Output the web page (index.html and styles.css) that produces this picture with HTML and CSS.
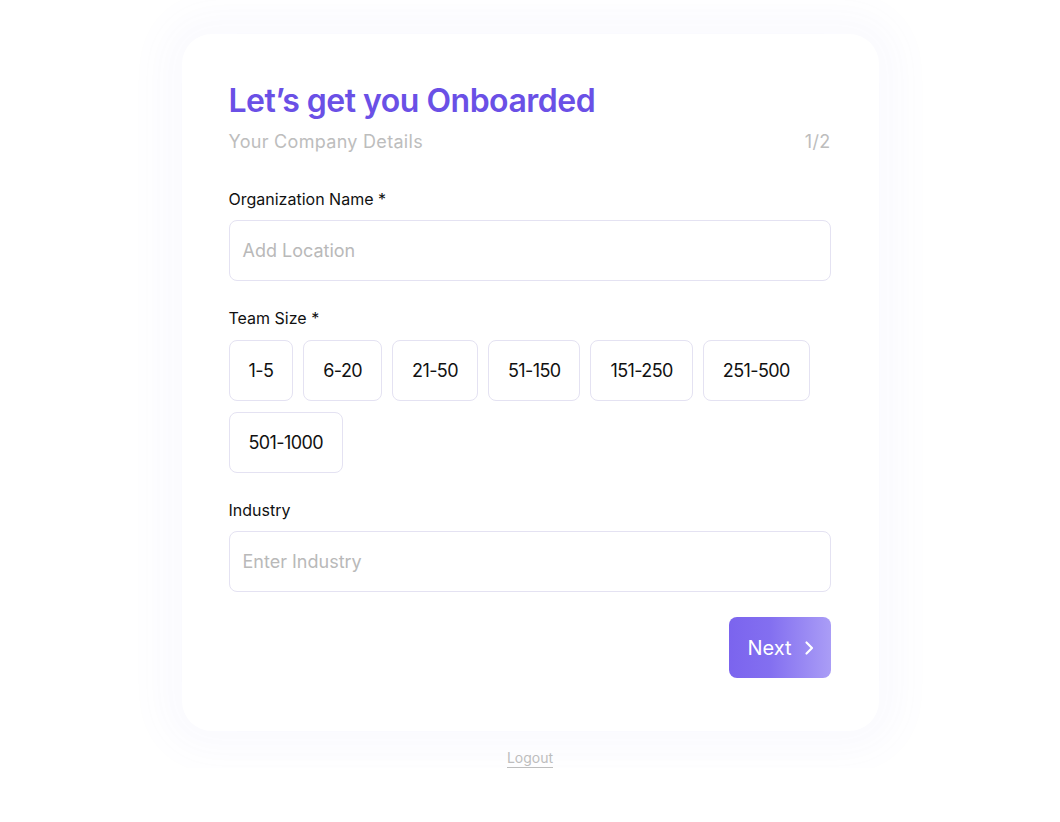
FILE: index.html
```html
<!DOCTYPE html>
<html lang="en">
<head>
<meta charset="utf-8">
<title>Onboarding</title>
<link rel="stylesheet" href="styles.css">
</head>
<body>
<main class="page">
  <section class="card">
    <h1 class="title">Let’s get you Onboarded</h1>
    <div class="subhead">
      <span>Your Company Details</span>
      <span>1/2</span>
    </div>

    <div class="field">
      <label class="label">Organization Name *</label>
      <div class="input"><span class="placeholder">Add Location</span></div>
    </div>

    <div class="field">
      <label class="label label-team">Team Size *</label>
      <div class="chips">
        <span class="chip">1-5</span>
        <span class="chip">6-20</span>
        <span class="chip">21-50</span>
        <span class="chip">51-150</span>
        <span class="chip">151-250</span>
        <span class="chip">251-500</span>
        <span class="chip">501-1000</span>
      </div>
    </div>

    <div class="field">
      <label class="label">Industry</label>
      <div class="input"><span class="placeholder">Enter Industry</span></div>
    </div>

    <div class="actions">
      <button class="next">Next
        <svg width="10" height="16" viewBox="0 0 10 16" fill="none"><path d="M2.5 2.5l5.5 5.5-5.5 5.5" stroke="#fff" stroke-width="2.2" stroke-linecap="round" stroke-linejoin="round"/></svg>
      </button>
    </div>
  </section>
  <a class="logout" href="#">Logout</a>
</main>
</body>
</html>
```

FILE: styles.css
```css
* { box-sizing: border-box; }
html, body { margin: 0; padding: 0; background: #fff; }
body { font-family: Inter, "Noto Sans", sans-serif; color: #111; }

.page {
  display: flex;
  flex-direction: column;
  align-items: center;
  padding-top: 34px;
}

.card {
  width: 697px;
  height: 697px;
  background: #fff;
  border-radius: 30px;
  padding: 47px 48px 48px 47px;
  box-shadow: 0 0 36px 22px rgba(110, 100, 235, 0.035);
}

.title {
  margin: 0;
  font-size: 32px;
  line-height: 40px;
  font-weight: 600;
  color: #6a50e6;
  letter-spacing: -0.5px;
}

.subhead {
  display: flex;
  justify-content: space-between;
  margin-top: 9px;
  font-size: 18px;
  line-height: 24px;
  color: #bdbdbd;
  font-weight: 400;
  letter-spacing: 0.3px;
}

.field { margin-top: 34px; }
.field + .field { margin-top: 26px; }

.label {
  display: block;
  font-size: 16px;
  line-height: 22px;
  color: #111;
  margin-bottom: 10px;
}

.label-team { margin-bottom: 11px; }

.input {
  height: 61px;
  border: 1.5px solid #e4e2f2;
  border-radius: 8px;
  display: flex;
  align-items: center;
  padding: 0 13px;
}

.placeholder {
  font-size: 18px;
  color: #b9b9b9;
}

.chips {
  display: flex;
  flex-wrap: wrap;
  gap: 11px 10px;
}

.chip {
  height: 61px;
  padding: 0 19px;
  border: 1.5px solid #e4e2f2;
  border-radius: 8px;
  display: flex;
  align-items: center;
  font-size: 18px;
  letter-spacing: -0.6px;
  color: #111;
}

.actions {
  display: flex;
  justify-content: flex-end;
  margin-top: 25px;
}

.next {
  width: 102px;
  height: 61px;
  border: 0;
  border-radius: 8px;
  background: linear-gradient(90deg, #7b64ee 0%, #836ff0 40%, #aa9df6 100%);
  color: #fff;
  font-family: inherit;
  font-size: 20px;
  display: flex;
  align-items: center;
  justify-content: center;
  gap: 12px;
  padding: 0 0 0 2px;
}

.logout {
  margin-top: 18px;
  font-size: 14px;
  line-height: 18px;
  color: #bdbdbd;
  text-decoration: none;
  border-bottom: 1px solid #bdbdbd;
}
```
